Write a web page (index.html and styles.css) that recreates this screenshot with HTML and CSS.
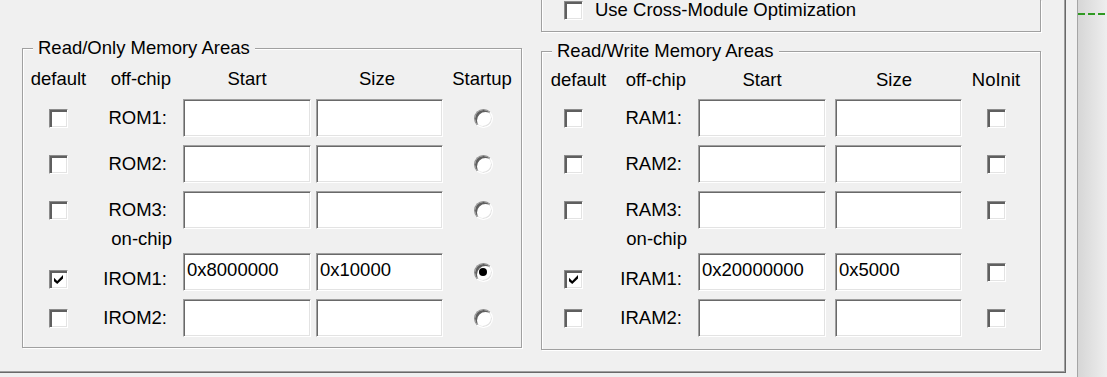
FILE: index.html
```html
<!DOCTYPE html>
<html lang="en">
<head>
    <meta charset="UTF-8">
    <title>Target Options - Memory Areas</title>
    <link rel="stylesheet" href="styles.css">
</head>
<body>
    <div class="screen">
        <div class="panel">
            <div class="opt-box">
                <label class="opt"><span class="cb"></span>Use Cross-Module Optimization</label>
            </div>

            <div class="groups">
                <fieldset class="group ro">
                    <legend>Read/Only Memory Areas</legend>
                    <div class="grid">
                        <div class="hd">default</div>
                        <div class="hd name">off-chip</div>
                        <div class="hd">Start</div>
                        <div class="hd">Size</div>
                        <div class="hd">Startup</div>

                        <div class="cell def"><span class="cb"></span></div>
                        <div class="cell name">ROM1:</div>
                        <input class="edit" type="text">
                        <input class="edit second" type="text">
                        <div class="cell opt-col"><span class="rb"></span></div>

                        <div class="cell def"><span class="cb"></span></div>
                        <div class="cell name">ROM2:</div>
                        <input class="edit" type="text">
                        <input class="edit second" type="text">
                        <div class="cell opt-col"><span class="rb"></span></div>

                        <div class="cell def"><span class="cb"></span></div>
                        <div class="cell name">ROM3:</div>
                        <input class="edit" type="text">
                        <input class="edit second" type="text">
                        <div class="cell opt-col"><span class="rb"></span></div>

                        <div class="chip">on-chip</div>

                        <div class="cell def low"><span class="cb"><svg width="9" height="9" viewBox="0 0 7 7"><polygon points="0,2.2 2.5,4.6 7,0 7,2.8 2.5,7 0,4.9" fill="#000"/></svg></span></div>
                        <div class="cell name low">IROM1:</div>
                        <input class="edit" type="text" value="0x8000000">
                        <input class="edit second" type="text" value="0x10000">
                        <div class="cell opt-col"><span class="rb"><span class="dot"></span></span></div>

                        <div class="cell def"><span class="cb"></span></div>
                        <div class="cell name">IROM2:</div>
                        <input class="edit" type="text">
                        <input class="edit second" type="text">
                        <div class="cell opt-col"><span class="rb"></span></div>
                    </div>
                </fieldset>

                <fieldset class="group rw">
                    <legend>Read/Write Memory Areas</legend>
                    <div class="grid">
                        <div class="hd">default</div>
                        <div class="hd name">off-chip</div>
                        <div class="hd">Start</div>
                        <div class="hd">Size</div>
                        <div class="hd">NoInit</div>

                        <div class="cell def"><span class="cb"></span></div>
                        <div class="cell name">RAM1:</div>
                        <input class="edit" type="text">
                        <input class="edit second" type="text">
                        <div class="cell opt-col"><span class="cb"></span></div>

                        <div class="cell def"><span class="cb"></span></div>
                        <div class="cell name">RAM2:</div>
                        <input class="edit" type="text">
                        <input class="edit second" type="text">
                        <div class="cell opt-col"><span class="cb"></span></div>

                        <div class="cell def"><span class="cb"></span></div>
                        <div class="cell name">RAM3:</div>
                        <input class="edit" type="text">
                        <input class="edit second" type="text">
                        <div class="cell opt-col"><span class="cb"></span></div>

                        <div class="chip">on-chip</div>

                        <div class="cell def low"><span class="cb"><svg width="9" height="9" viewBox="0 0 7 7"><polygon points="0,2.2 2.5,4.6 7,0 7,2.8 2.5,7 0,4.9" fill="#000"/></svg></span></div>
                        <div class="cell name low">IRAM1:</div>
                        <input class="edit" type="text" value="0x20000000">
                        <input class="edit second" type="text" value="0x5000">
                        <div class="cell opt-col"><span class="cb"></span></div>

                        <div class="cell def"><span class="cb"></span></div>
                        <div class="cell name">IRAM2:</div>
                        <input class="edit" type="text">
                        <input class="edit second" type="text">
                        <div class="cell opt-col"><span class="cb"></span></div>
                    </div>
                </fieldset>
            </div>
        </div>

        <div class="gutter"></div>

        <div class="side">
            <div class="trace"></div>
        </div>
    </div>
</body>
</html>
```

FILE: styles.css
```css
body {
    margin: 0;
    background-color: #f0f0f0;
    font-family: "Liberation Sans", Arial, sans-serif;
    font-size: 18.5px;
    color: #000;
}

.screen {
    display: flex;
    width: 1107px;
    height: 377px;
    overflow: hidden;
}

/* dialog page, left edge is off screen */
.panel {
    box-sizing: border-box;
    width: 1066px;
    height: 373px;
    padding-left: 22px;
    border-right: 1px solid #696969;
    border-bottom: 1px solid #696969;
    box-shadow: inset -1px -1px 0 #a0a0a0;
    display: flex;
    flex-direction: column;
    flex-shrink: 0;
}

.gutter {
    width: 11px;
    flex-shrink: 0;
}

.side {
    flex: 1;
    border-left: 1px solid #a5a5a5;
    background: linear-gradient(to right, #d6d6d6, #eeeeee);
}

.trace {
    margin-top: 13px;
    height: 2px;
    background: repeating-linear-gradient(to right, #2f9a22 0 7px, transparent 7px 10px);
}

/* cut-off option box at the top */
.opt-box {
    box-sizing: border-box;
    width: 500px;
    height: 32px;
    margin-left: 519px;
    padding-left: 22px;
    border: 1px solid #a0a0a0;
    border-top: none;
    box-shadow: 1px 1px 0 #fff, inset 1px 0 0 #fff;
}

.opt {
    display: flex;
    align-items: center;
    gap: 12px;
    height: 20px;
    line-height: 20px;
}

.groups {
    display: flex;
    align-items: flex-start;
    gap: 19px;
    margin-top: 6px;
}

.group {
    box-sizing: border-box;
    width: 500px;
    min-width: 0;
    margin: 0;
    padding: 0 0 10px;
    border: 1px solid #a0a0a0;
    box-shadow: 1px 1px 0 #fff, inset 1px 1px 0 #fff;
}

.group legend {
    margin-left: 10px;
    padding: 0 5px;
    line-height: 20px;
    background-color: #f0f0f0;
}

.group.rw {
    margin-top: 3px;
    padding-bottom: 12px;
}

.grid {
    display: grid;
}

.ro .grid {
    grid-template-columns: 71px 89px 128px 132px 78px;
    grid-template-rows: 41px 46px 46px 38px 24px 46px 38px;
}

.rw .grid {
    grid-template-columns: 73px 83px 128px 136px 68px;
    grid-template-rows: 38px 46px 46px 38px 24px 46px 38px;
}

.hd {
    align-self: center;
    text-align: center;
    line-height: 20px;
}

.hd.name {
    text-align: right;
    padding-right: 12px;
}

.cell {
    height: 38px;
    display: flex;
    align-items: center;
    justify-content: center;
}

.cell.def {
    grid-column: 1;
}

.cell.name {
    justify-content: flex-end;
    padding-right: 16px;
}

.cell.low {
    padding-top: 7px;
    box-sizing: border-box;
    height: 45px;
}

.rw .cell.def {
    padding-right: 10px;
}

.ro .cell.opt-col {
    padding-left: 2px;
}

.chip {
    grid-column: 2;
    text-align: right;
    padding-right: 11px;
    line-height: 20px;
}

.edit {
    box-sizing: border-box;
    width: 100%;
    height: 38px;
    margin: 0;
    padding: 5px 3px 9px;
    font-family: inherit;
    font-size: 18.5px;
    color: #000;
    background-color: #fff;
    border: 1px solid;
    border-color: #a0a0a0 #fff #fff #a0a0a0;
    box-shadow: inset 1px 1px 0 #696969, inset -1px -1px 0 #e3e3e3;
    outline: none;
}

.edit.second {
    width: 127px;
    justify-self: end;
}

.cb {
    box-sizing: border-box;
    width: 19px;
    height: 19px;
    flex-shrink: 0;
    display: flex;
    align-items: center;
    justify-content: center;
    background-color: #fff;
    border: 1px solid;
    border-color: #8c8c8c #fff #fff #8c8c8c;
    box-shadow: inset 2px 2px 0 #5f5f5f, inset -1px -1px 0 #e3e3e3;
}

.rb {
    box-sizing: border-box;
    width: 19px;
    height: 19px;
    display: flex;
    align-items: center;
    justify-content: center;
    border-radius: 50%;
    background-color: #fff;
    border: 1px solid;
    border-color: #8c8c8c #fff #fff #8c8c8c;
    box-shadow: inset 2px 2px 0 #5f5f5f, inset -1px -1px 0 #e3e3e3;
}

.dot {
    width: 8px;
    height: 8px;
    border-radius: 50%;
    background-color: #000;
}
```
